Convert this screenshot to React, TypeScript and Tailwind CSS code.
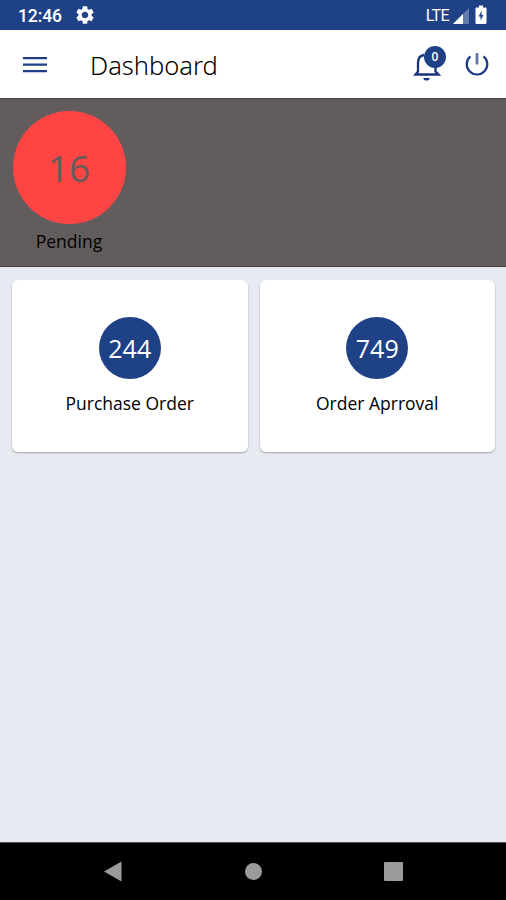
import { MdSettings } from 'react-icons/md';

interface OrderCard {
  title: string;
  count: number;
}

const orderCards: OrderCard[] = [
  { title: 'Purchase Order', count: 244 },
  { title: 'Order Aprroval', count: 749 },
];

function StatusBar() {
  return (
    <div className="flex h-[30px] items-center justify-between bg-[#1f4287] pl-[18px] pr-[19px] text-white">
      <div className="flex items-center gap-[11px]">
        <span className="w-[45px] whitespace-nowrap pt-[2px] font-[Roboto,sans-serif] text-[17.5px] font-medium leading-[30px] tracking-[-0.1px]">12:46</span>
        <MdSettings className="h-[22px] w-[22px]" />
      </div>
      <div className="flex items-center">
        <span className="mr-[3px] pt-[2px] font-[Roboto,sans-serif] text-[16px] leading-[30px] tracking-[-0.6px]">LTE</span>
        <svg className="mt-[2px] h-[18px] w-[18px]" viewBox="0 0 18 18">
          <path d="M17 1v16H1z" fill="#fff" fillOpacity="0.3" />
          <path d="M11 7v10H1z" fill="#fff" />
        </svg>
        <svg className="ml-[5px] h-[20px] w-[12px]" viewBox="0 0 12 20">
          <path d="M4 0.5h4v2h2.2c.8 0 1.3.5 1.3 1.300v13.900c0 .8-.5 1.300-1.300 1.300H1.800c-.8 0-1.300-.5-1.300-1.300V3.800c0-.8.5-1.300 1.300-1.300H4z" fill="#fff" />
          <path d="M6.600 6 3.500 11.500h2V15.500L8.500 10H6.600z" fill="#1f4287" />
        </svg>
      </div>
    </div>
  );
}

function Header() {
  return (
    <header className="flex h-[69px] items-center border-b border-[#45413f] bg-white pl-[23px] pr-[16px]">
      <svg className="mt-[1px] h-[18px] w-[24px]" viewBox="0 0 24 18" fill="#1f3d87">
        <path d="M0 1h24v2.300H0zM0 7.500h24v2.300H0zM0 14h24v2.300H0z" />
      </svg>
      <h1 className="ml-[43px] flex-1 pt-[1px] font-['Noto_Sans','Open_Sans',sans-serif] text-[25.5px] font-light leading-[34px] text-black">Dashboard</h1>
      <button className="relative mr-[22px] mt-[2px] h-[38px] w-[30px]">
        <svg className="h-[38px] w-[30px]" viewBox="0 0 30 38" fill="none" stroke="#1a3380" strokeWidth="2.300">
          <path d="M12 9C8 9.500 6 12.500 6 17v8.500L3.500 28.500h23L23.500 25.500V19" />
          <path d="M11.300 32h6.500c-.5 1.800-1.600 2.600-3.250 2.600s-2.750-.8-3.250-2.600z" fill="#1a3380" stroke="none" />
        </svg>
        <span className="absolute left-[12px] top-0 flex h-[22px] w-[22px] items-center justify-center rounded-full bg-[#1f4287] text-[12px] font-semibold text-white">0</span>
      </button>
      <svg className="h-[26px] w-[26px]" viewBox="0 0 26 26" fill="none" stroke="#1c3a85" strokeWidth="2.200">
        <path d="M6.400 5.300a10.300 10.300 0 1 0 13.200 0" />
        <path d="M13 2v11.500" stroke="#6476a3" strokeWidth="2.800" />
      </svg>
    </header>
  );
}

function PendingSummary() {
  return (
    <section className="h-[168px] border-b border-[#45413f] bg-[#625d5c] px-[12px] pt-[12px]">
      <div className="flex w-[114px] flex-col items-center">
        <div className="flex h-[113px] w-[113px] items-center justify-center rounded-full bg-[#ff4444] text-[37px] text-[#625d5c]">16</div>
        <p className="mt-[5px] text-[17.5px] leading-[25px] text-black">Pending</p>
      </div>
    </section>
  );
}

function NavigationBar() {
  return (
    <nav className="flex h-[58px] items-center justify-between border-t border-[#555] bg-black pl-[103px] pr-[103px]">
      <svg className="h-[22px] w-[20px]" viewBox="0 0 20 22">
        <path d="M18.500 0.500v20L1 10.500z" fill="#9b9b9b" />
      </svg>
      <div className="h-[17px] w-[17px] rounded-full bg-[#9b9b9b]" />
      <div className="h-[19px] w-[19px] rounded-[1px] bg-[#9b9b9b]" />
    </nav>
  );
}

export default function App() {
  return (
    <div className="flex h-[900px] w-[506px] flex-col overflow-hidden bg-[#e7ebf1] font-['Open_Sans','Noto_Sans',sans-serif]">
      <StatusBar />
      <Header />
      <PendingSummary />
      <main className="grid flex-1 grid-cols-2 content-start gap-[12px] pl-[12px] pr-[11px] pt-[13px]">
        {orderCards.map((card) => (
          <div
            key={card.title}
            className="flex h-[172px] flex-col items-center rounded-[6px] bg-white pt-[37px] shadow-[0_1px_2px_rgba(0,0,0,0.3)]"
          >
            <div className="flex h-[62px] w-[62px] items-center justify-center rounded-full bg-[#1f4287] pt-[1px] text-[25px] text-white">
              {card.count}
            </div>
            <p className="mt-[12px] text-[17.5px] leading-[25px] text-black">{card.title}</p>
          </div>
        ))}
      </main>
      <NavigationBar />
    </div>
  );
}
